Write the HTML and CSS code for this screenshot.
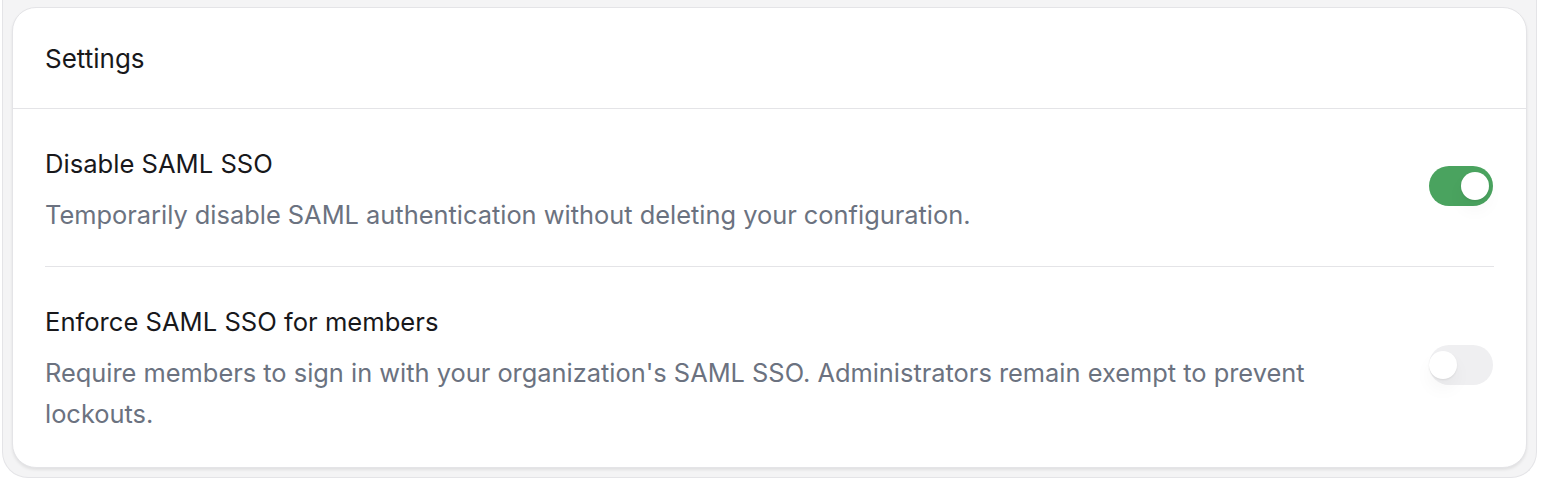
FILE: index.html
```html
<!doctype html>
<html lang="en">
    <head>
        <meta charset="utf-8">
        <meta name="viewport" content="width=device-width, initial-scale=1.0"/>
        <title>SAML settings</title>
        <link rel="stylesheet" href="styles.css">
    </head>
    <body>
        <div class="shell">
            <section class="card">
                <header class="card-head">Settings</header>
                <div class="card-body">
                    <div class="setting">
                        <div class="setting-text">
                            <div class="setting-title">Disable SAML SSO</div>
                            <div class="setting-desc">Temporarily disable SAML authentication without deleting your configuration.</div>
                        </div>
                        <button class="toggle on" aria-pressed="true"><span class="knob"></span></button>
                    </div>
                    <div class="setting">
                        <div class="setting-text">
                            <div class="setting-title">Enforce SAML SSO for members</div>
                            <div class="setting-desc">Require members to sign in with your organization's SAML SSO. Administrators remain exempt to prevent lockouts.</div>
                        </div>
                        <button class="toggle" aria-pressed="false"><span class="knob"></span></button>
                    </div>
                </div>
            </section>
        </div>
    </body>
</html>
```

FILE: styles.css
```css
/*----- reset -----*/

*{
	box-sizing: border-box;
}

html, body{
	margin: 0;
	padding: 0;
	background: #fff;
	font-family: Inter, "Noto Sans", sans-serif;
	-webkit-font-smoothing: antialiased;
}

/*----- outer frame -----*/

.shell{
	margin: 0 5px 0 2px;
	padding: 7px 9px 9px 9px;
	background: #f4f4f5;
	border: 1px solid #e4e4e7;
	border-top: none;
	border-radius: 0 0 26px 26px;
}

/*----- card -----*/

.card{
	background: #fff;
	border: 1px solid #e4e4e7;
	border-radius: 24px;
	box-shadow: 0 2px 3px rgba(0,0,0,0.08);
}

.card-head{
	height: 101px;
	display: flex;
	align-items: center;
	padding: 0 32px;
	font-size: 26px;
	color: #18181b;
	border-bottom: 1px solid #e4e4e7;
}

.card-body{
	padding: 0 32px;
}

/*----- setting rows -----*/

.setting{
	display: flex;
	align-items: center;
	gap: 48px;
	padding: 39px 0 31px 0;
}

.setting + .setting{
	border-top: 1px solid #e4e4e7;
}

.setting:last-child{
	padding-bottom: 33px;
}

.setting-text{
	flex: 1;
	padding-right: 40px;
}

.setting-title{
	font-size: 25.6px;
	line-height: 32px;
	color: #18181b;
}

.setting-desc{
	margin-top: 14px;
	font-size: 25.4px;
	line-height: 41px;
	color: #6b7280;
}

/*----- toggle -----*/

.toggle{
	position: relative;
	flex: none;
	width: 64px;
	height: 40px;
	margin: 0 1px 11px 0;
	padding: 0;
	border: none;
	border-radius: 20px;
	background: #efeff1;
	cursor: pointer;
}

.toggle.on{
	background: #4aa35f;
}

.toggle .knob{
	position: absolute;
	top: 6px;
	left: 0;
	width: 28px;
	height: 28px;
	border-radius: 50%;
	background: #fff;
	box-shadow: 0 1px 2px rgba(0,0,0,0.08), 0 10px 18px rgba(0,0,0,0.04);
}

.toggle.on .knob{
	left: 32px;
}
```
